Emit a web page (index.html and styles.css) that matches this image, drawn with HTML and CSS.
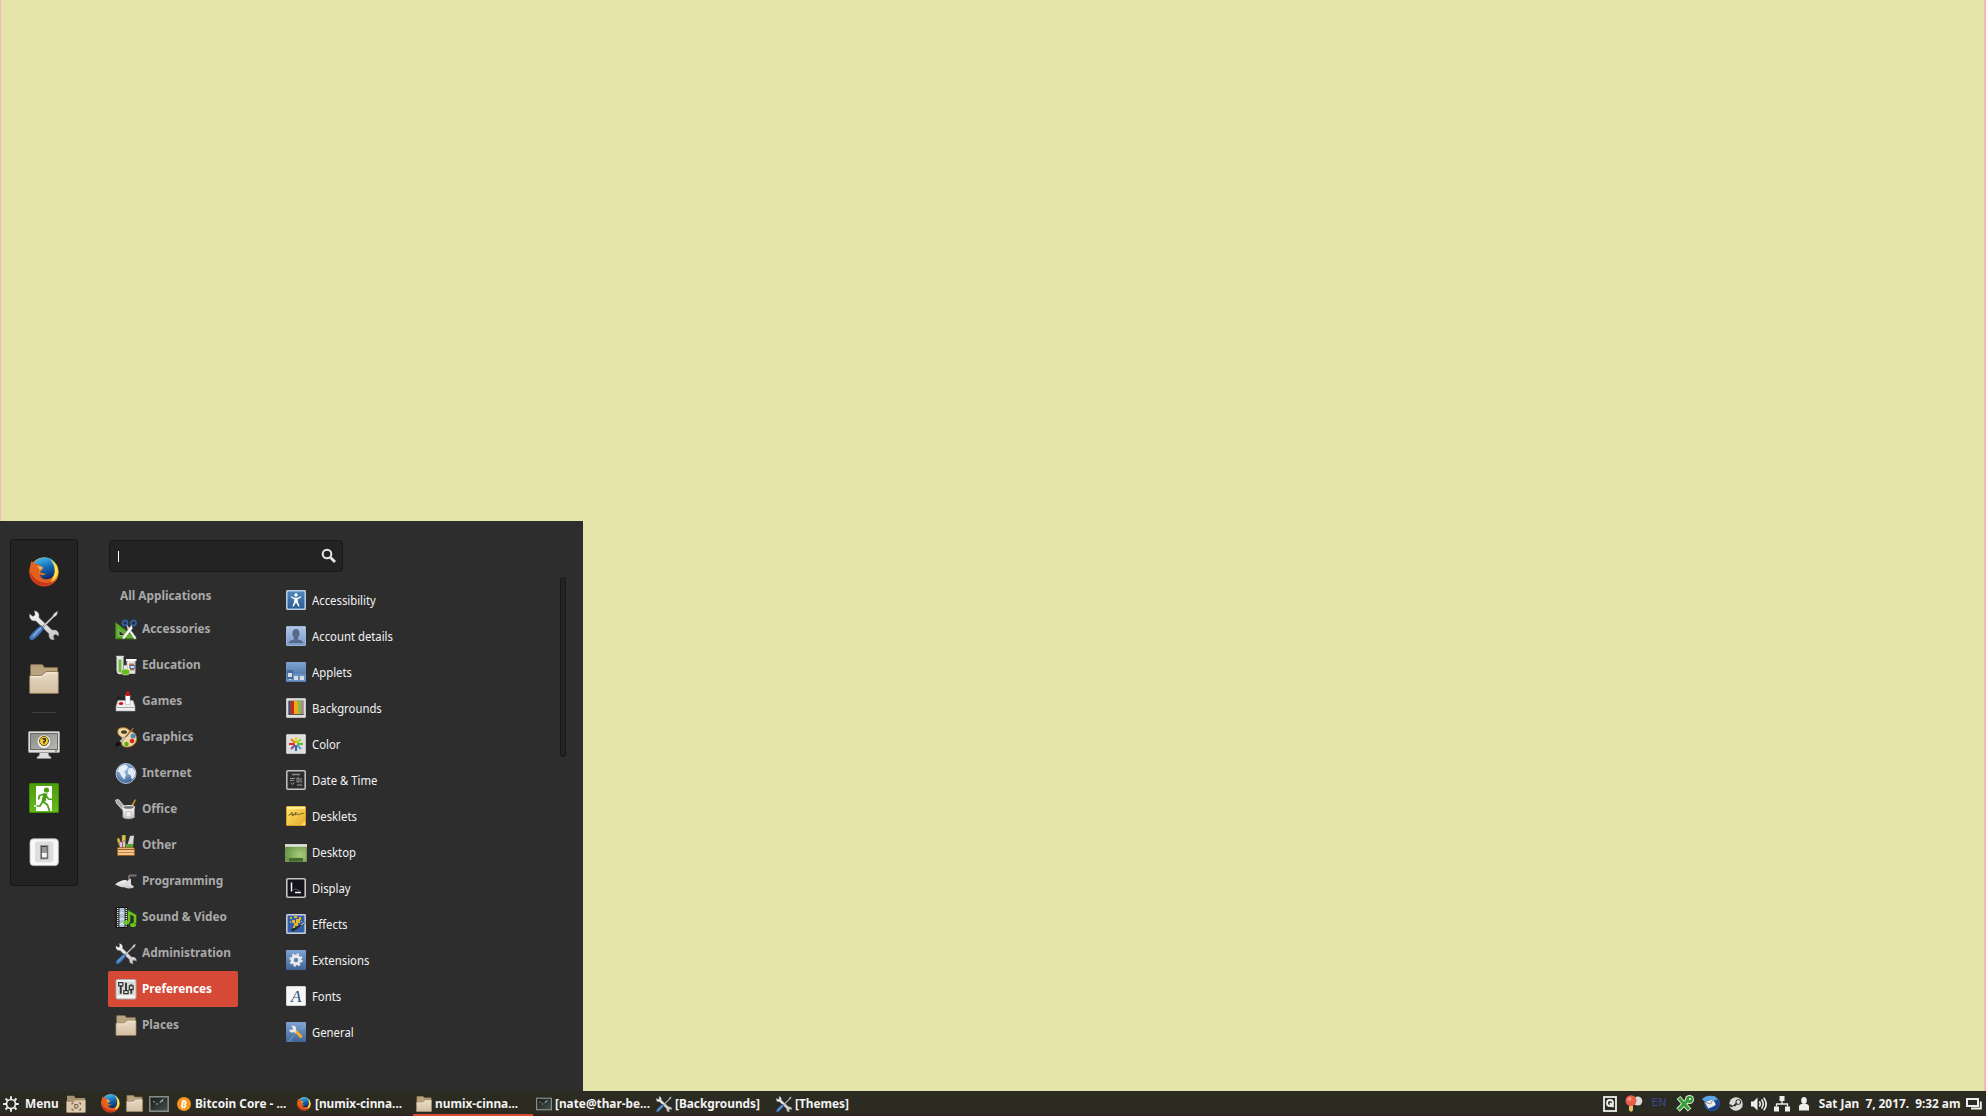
FILE: index.html
```
<!DOCTYPE html>
<html lang="en">
<head>
<meta charset="utf-8">
<title>Desktop</title>
<link rel="stylesheet" href="styles.css">
</head>
<body>
<svg class="defs" aria-hidden="true">
  <defs>
    <linearGradient id="gBlue" x1="0" y1="0" x2="0" y2="1"><stop offset="0" stop-color="#7fa3cf"/><stop offset="1" stop-color="#3f6698"/></linearGradient>
    <linearGradient id="gAccess" x1="0" y1="0" x2="0" y2="1"><stop offset="0" stop-color="#4f88bd"/><stop offset="1" stop-color="#2b5b92"/></linearGradient>
    <linearGradient id="gUser" x1="0" y1="0" x2="0" y2="1"><stop offset="0" stop-color="#b0c6e6"/><stop offset="1" stop-color="#7799c8"/></linearGradient>
    <linearGradient id="gTan" x1="0" y1="0" x2="0" y2="1"><stop offset="0" stop-color="#e9dbc5"/><stop offset="1" stop-color="#d3bfa2"/></linearGradient>
    <linearGradient id="gLight" x1="0" y1="0" x2="0" y2="1"><stop offset="0" stop-color="#fafafa"/><stop offset="1" stop-color="#c4c4c4"/></linearGradient>
    <linearGradient id="gGreen" x1="0" y1="0" x2="0" y2="1"><stop offset="0" stop-color="#4d9c0c"/><stop offset="1" stop-color="#66b91c"/></linearGradient>
    <linearGradient id="gNote" x1="0" y1="0" x2="1" y2="1"><stop offset="0" stop-color="#fbe56a"/><stop offset="1" stop-color="#e9a92b"/></linearGradient>
    <linearGradient id="gFox" x1="0.9" y1="0" x2="0.2" y2="1"><stop offset="0" stop-color="#fff06a"/><stop offset=".35" stop-color="#f9b020"/><stop offset=".65" stop-color="#e9661b"/><stop offset="1" stop-color="#c9281c"/></linearGradient>
    <linearGradient id="gSky" x1="0.3" y1="0" x2="0.6" y2="1"><stop offset="0" stop-color="#45b9ee"/><stop offset=".5" stop-color="#1269b4"/><stop offset="1" stop-color="#0f2463"/></linearGradient>
    <radialGradient id="gGlobe" cx=".4" cy=".3" r=".8"><stop offset="0" stop-color="#a9c8ec"/><stop offset="1" stop-color="#2d568f"/></radialGradient>
    <radialGradient id="gDesk" cx=".7" cy=".6" r=".8"><stop offset="0" stop-color="#a9cc7c"/><stop offset="1" stop-color="#5f9140"/></radialGradient>
    <linearGradient id="gScreen" x1="0" y1="0" x2="1" y2="1"><stop offset="0" stop-color="#8a8d88"/><stop offset="1" stop-color="#b7bab4"/></linearGradient>
    <linearGradient id="gTerm" x1="0" y1="0" x2="1" y2="1"><stop offset="0" stop-color="#151819"/><stop offset="1" stop-color="#495251"/></linearGradient>

    <symbol id="firefox" viewBox="0 0 30 30">
      <circle cx="15" cy="15" r="14.6" fill="url(#gFox)"/>
      <path d="M5 6C8 1.8 12 .4 16 .4c5 0 9 2.600 10.500 6.500C28 12 25 22 19 22.500c-4 .5-8-2-8-5 1.500 1 4 1 6-.8-2.500.2-3.500-1-6-1.200 0-2 2.200-2.200 3.200-4-2.200-.4-3-2.500-5.700-2.700C7 8.500 6 7.500 5 6z" fill="url(#gSky)"/>
      <path d="M21 2c5 3 8.500 8 7.500 14-.8 4-3 7-6.500 9.500 2-4.500 4.500-8 3.500-14-.4-4-2-6.500-4.500-9.500z" fill="#ffe34d"/>
      <path d="M2.500 4c1 1.500 3 2.500 4.500 3 2 .6 4 1 6 2.500-1.500 1.500-3 2-3 4-3.500 5 2 10.500 8 9 2.500-.6 4-1.200 5-2-1.500 4-5 6.500-9 6.500C7 27.500.5 22 .5 14.500.5 10 1.500 7 2.500 4z" fill="#e4601e"/>
      <path d="M1 14c0 8 6 14.500 14 14.600 5 0 9-2 11.500-5.600-4 3-9 4-14 2C6 23 3 19 1 14z" fill="#c93420"/>
      <path d="M8 9c2 .2 4 .4 6 1.200-.5 1-1.500 1.800-3.500 2.100z" fill="#f6b069"/>
    </symbol>

    <symbol id="tools" viewBox="0 0 30 30">
      <path d="M5.500.8 6.200 5 3.800 6.400.8 4C-.2 8 2 11.500 6.600 10.800L20 23.800c-.8 4 2 6.500 5.200 6l-.8-4 2-1.600 3.300 1.800c.8-3.600-2-6.800-6.400-5.700L9.800 7.600C10.600 4.500 9.400 1.500 5.500.8z" fill="url(#gLight)" stroke="#8d8d8d" stroke-width=".5"/>
      <path d="M28.600 1.500c-1.600 0-4.600 2.500-4.800 4.500L13.600 16l1.200 1.200L25 7c2-.3 3.900-3.300 3.600-5.500z" fill="#e1e1e1" stroke="#666" stroke-width=".6"/>
      <path d="M12.300 15.600c-3.300 1.500-8.500 7-11.300 10.500-1.500 2.800 1 5 3.300 3.500 3.500-2.500 8.500-7.500 10.500-11.200z" fill="#4a7cc0" stroke="#234f8c" stroke-width=".8"/>
      <path d="m4 26 8-8" stroke="#8fb3e2" stroke-width="1.200"/>
    </symbol>

    <symbol id="folder" viewBox="0 0 30 30">
      <path d="M1.500 15V1.500C1.500.8 2 .6 2.500.6h10c1 0 1.300.4 2 1.400l1 1.500h13V15z" fill="#b9a27e" stroke="#806a48"/>
      <path d="M.6 28.500V12.600c0-.8.400-1 1-1h9.900c1 0 1.500-.2 2.300-1L16 8.300c.6-.6 1-.7 2-.7h10.400c.7 0 1 .3 1 1v19.900c0 .6-.3.900-.9.900H1.500c-.6 0-.9-.3-.9-.9z" fill="url(#gTan)" stroke="#8c7450"/>
      <path d="M1.700 12.700h10.500c1 0 1.700-.4 2.300-1l2.200-2.300c.5-.5.800-.6 1.500-.6h10" fill="none" stroke="#faf3e6"/>
    </symbol>

    <symbol id="lock" viewBox="0 0 32 28">
      <path d="M12 21h8l1 4 2 1v1.500H9V26l2-1z" fill="#dcdcda" stroke="#8c8c8a" stroke-width=".6"/>
      <rect x=".5" y=".5" width="31" height="21" rx="1" fill="#dededc" stroke="#9b9b99"/>
      <rect x="2.500" y="2.500" width="27" height="16" fill="url(#gScreen)" stroke="#686b66"/>
      <circle cx="16" cy="10.800" r="7" fill="#eeeeec" stroke="#777a74" stroke-width=".7"/>
      <circle cx="16" cy="10" r="4.500" fill="#f5cf32" stroke="#6d5206"/>
      <path d="M14.500 8h2.800v2l-1.600 1 .8 1.500" fill="none" stroke="#222" stroke-width="1.300"/>
      <path d="M27 20h2" stroke="#555"/>
    </symbol>

    <symbol id="exit" viewBox="0 0 30 30">
      <rect x=".5" y=".5" width="29" height="29" rx="1" fill="url(#gGreen)" stroke="#3f8a04"/>
      <rect x="7" y="3" width="16" height="25" fill="#fff"/>
      <circle cx="17.500" cy="7" r="2.600" fill="#4b9d12"/>
      <path d="M15.500 10.500 13.500 18l5 4 2 6M14 18l-3 5H5M15.500 11l-5 1.500-1 4M16.500 12l3 4 4 .5" fill="none" stroke="#4b9d12" stroke-width="1.700" stroke-linejoin="round"/>
      <path d="M14.500 10.500h4l-2 8-3.500-1z" fill="#4b9d12"/>
      <path d="M5 23h2.500" stroke="#fff" stroke-width="1.500"/>
    </symbol>

    <symbol id="power" viewBox="0 0 30 28">
      <rect x="1" y=".8" width="28.400" height="26.800" rx="3.500" fill="#f8f8f8" stroke="#bdbdbd" stroke-width=".8"/>
      <rect x="6" y="3.500" width="18.500" height="21" rx="3" fill="#dedede"/>
      <rect x="11.500" y="7.500" width="7.500" height="13.500" fill="#444" stroke="#999"/>
      <rect x="12.800" y="9" width="5" height="7" fill="#999"/><rect x="12.800" y="15" width="5" height="4.500" fill="#f7f7f7"/>
    </symbol>

    <symbol id="accessories" viewBox="0 0 22 20">
      <path d="M.7 3v16.300h21z" fill="#62a92f" stroke="#3c7d14"/><path d="M4 10.500v5.500h6.500z" fill="#2d2d2d" stroke="#a0d873" stroke-width=".8"/>
      <circle cx="10" cy="3.500" r="2.500" fill="none" stroke="#315f9f" stroke-width="1.800"/><circle cx="18.500" cy="3.500" r="2.500" fill="none" stroke="#315f9f" stroke-width="1.800"/>
      <path d="m12 5.500 8.800 12v2h-1.500L12.500 9.500z" fill="#f5f5f5" stroke="#aaa" stroke-width=".4"/><path d="M16.500 5.500 8 17l-.3 2.500L9.500 19l8-10z" fill="#fff" stroke="#aaa" stroke-width=".4"/>
    </symbol>
    <symbol id="education" viewBox="0 0 22 20">
      <path d="M1 .8h8M2 1v14q0 3.500 3 3.500t3-3.500V1z" fill="#dfe8da" stroke="#ddd"/><path d="M3.500 4h3v12q-1.500 2-3 0z" fill="#72b447"/>
      <path d="M12 4h8v14h-8z" fill="#e9e9e9" stroke="#bbb"/><path d="M11 4.500h10.500" stroke="#fff" stroke-width="2"/><path d="M14 8h5v7h-4z" fill="#bd7437"/><path d="M15 10h5v3h-5z" fill="#d5dde8" stroke="#4771a3"/>
      <path d="M9 10h3v3l3 3.500q0 3-4.500 3T6 16.500L9 13z" fill="#e8f2e0" stroke="#ccc" stroke-width=".6"/><ellipse cx="10.500" cy="16.500" rx="4" ry="2.700" fill="#65bd1d"/>
    </symbol>
    <symbol id="games" viewBox="0 0 22 20">
      <path d="M3 8q-2-1 0-2.500l3 1" fill="none" stroke="#171717"/>
      <path d="M3 9h15l2 6v4.500H1V15z" fill="#eee" stroke="#aaa" stroke-width=".6"/><path d="M1.500 16h18" stroke="#aaa"/>
      <rect x="10.500" y="4" width="4.500" height="9" fill="#fff" stroke="#aaa" stroke-width=".5"/><rect x="11" y="0" width="3.500" height="4.500" fill="#d01313"/><ellipse cx="6" cy="12" rx="2.200" ry="1.500" fill="#d01313"/>
    </symbol>
    <symbol id="graphics" viewBox="0 0 22 20">
      <path d="M4 1C8-.5 13 0 15 4c5 0 6.500 4 6.500 8-.5 5-5.500 8-10.500 7.500C6 19 6 15 8 12c1-2-4-3-5-6C2.500 4 3 2 4 1z" fill="#efd8a5" stroke="#b97c21"/>
      <ellipse cx="9" cy="4.500" rx="3" ry="1.800" fill="#4a3c26"/><circle cx="18" cy="8.500" r="2.500" fill="#4f86c6"/><circle cx="17" cy="13.500" r="2.300" fill="#d92920"/><circle cx="11.500" cy="16.500" r="2.300" fill="#58ad20"/>
      <path d="M18.500.5 6 14.500" stroke="#8f6b39" stroke-width="1.500"/><path d="m10 9-5 6" stroke="#bbb" stroke-width="2"/><path d="M5 14q-4 0-5 5 6 0 6-4z" fill="#111"/>
    </symbol>
    <symbol id="internet" viewBox="0 0 20 20">
      <circle cx="10" cy="10" r="9.500" fill="url(#gGlobe)" stroke="#c8d9ee" stroke-width=".8"/>
      <path d="M4 3.500 9 1.500l3 2-1.500 3L8 8l2 3-1.500 5-3-3.500L4 9 1.500 8zM12.500 5l4-.5 2.500 4-1 5-2.500 2.500-1-4-3-2z" fill="#f0f4f9" opacity=".9"/>
    </symbol>
    <symbol id="office" viewBox="0 0 20 20">
      <path d="M20 0 15 10l-2-1 5-8z" fill="#c98c2d"/><path d="m0 1 3-.5L11 10l-3 2L1 4z" fill="#aaa" stroke="#ddd" stroke-width=".8"/>
      <path d="M7 8v9.500q5 3 11 0V8z" fill="url(#gLight)" stroke="#999" stroke-width=".5"/><ellipse cx="12.500" cy="8" rx="5.500" ry="1.800" fill="#777" stroke="#f3f3f3"/><path d="M10 12h5v5h-5z" fill="#eee" stroke="#aaa" stroke-width=".5"/>
    </symbol>
    <symbol id="other" viewBox="0 0 20 21">
      <path d="m1 4 3 9h3L3 3zM6 0h3.500v12H6z" fill="#d9c54d" stroke="#9a8525" stroke-width=".6"/><path d="m14 1 4-.5-1 11h-6z" fill="#d5d5d5"/><path d="M4 7h2v6H4zM7 6h2v7H7z" fill="#fff" stroke="#76397d" stroke-width=".6"/><path d="M10 9h7v4h-7z" fill="#55a729"/>
      <path d="M2 12.500h15.500l1.500 2H1z" fill="#e8b67c" stroke="#8a4d17" stroke-width=".6"/><path d="M1.500 14.500h17v6h-17z" fill="#f0c48e" stroke="#9a5a20"/><path d="M2 17.500h16" stroke="#c78745"/>
    </symbol>
    <symbol id="programming" viewBox="0 0 22 14">
      <path d="M14 10.500V2q0-1 1-1h6.500" fill="none" stroke="#777" stroke-width="1.800"/><path d="M0 10q5-4.500 11-4.500l3 3 5 3.500-1 1.500q-5 1-8-.5Q4 12.500 0 10z" fill="url(#gLight)"/><path d="m8 9 8-5v7z" fill="#ddd"/>
    </symbol>
    <symbol id="media" viewBox="0 0 22 21">
      <path d="M1 .5h11.500v20H1z" fill="#303030" stroke="#111"/><path d="M4.500 1h5v19h-5z" fill="#a8c1d9"/><path d="M4.500 6h5m-5 6h5m-5 5h5" stroke="#f2f2f2"/><path d="M2.700 1v19M11.300 1v19" stroke="#eee" stroke-width="1.300" stroke-dasharray="1 1"/>
      <path d="M14 15V5l6 3.500v8" fill="none" stroke="#43950a" stroke-width="3"/><path d="M14 15V5.500l6 3.500v7" fill="none" stroke="#7ed52a" stroke-width="1.400"/><ellipse cx="11.500" cy="15.500" rx="3" ry="2" fill="#67c51c"/><ellipse cx="18" cy="18" rx="3" ry="2" fill="#67c51c"/>
    </symbol>
    <symbol id="prefs" viewBox="0 0 20 20">
      <rect x=".5" y=".5" width="19" height="18.500" rx="1.500" fill="#f4f4f2" stroke="#aaa"/><rect x="1.800" y="2.500" width="16.500" height="13" fill="#d9d9d6"/>
      <path d="M5 5v9M10 3.500V13M15 5v9" stroke="#333" stroke-width="1.800"/><path d="M3 3.500h4v3H3zM8 11h4v3H8zM13.200 6.500h3.600v3.500h-3.600z" fill="#eee" stroke="#333" stroke-width="1.200"/>
    </symbol>

    <symbol id="accessibility" viewBox="0 0 20 20"><rect x=".8" y=".8" width="18.400" height="18.400" rx=".5" fill="url(#gAccess)" stroke="#b8d0e6" stroke-width="1.500"/><circle cx="10" cy="5" r="1.700" fill="#fff"/><path d="m5 6.300 3.500 1.500h3L15 6.300l.3 1L11.800 9.300v2.200l1.800 5h-1.300L10 12.300l-2.300 4.200H6.400l1.800-5V9.300L4.700 7.300z" fill="#fff"/></symbol>
    <symbol id="account" viewBox="0 0 20 20"><rect x=".5" y=".5" width="19" height="19" rx=".5" fill="url(#gUser)" stroke="#9db6da"/><path d="M10 3c4 0 4 5 3 7-.6 1.500-1.500 2-1 3 .5 1.300 5 .8 5 4H3c0-3.200 4.500-2.700 5-4 .5-1-.4-1.500-1-3-1-2-1-7 3-7z" fill="#566b8b"/></symbol>
    <symbol id="applets" viewBox="0 0 20 20"><rect width="20" height="20" rx=".7" fill="url(#gBlue)"/><path d="M0 12h20v7.500H0z" fill="#6a91c3"/><path d="M1 8h6v9H1z" fill="#456b9f"/><path d="M2 11h4v4H2zM8 14h4v4H8zM14 14h4v4h-4zM3 17h2v1H3z" fill="#d8dde3"/></symbol>
    <symbol id="backgrounds" viewBox="0 0 20 20"><rect x=".5" y=".5" width="19" height="19" rx=".5" fill="#ddd" stroke="#c2c0bd"/><path d="M2.500 2.500h15V17h-15z" fill="#777"/><path d="M2.500 3h2v13h-2z" fill="#2c4e75"/><path d="M4.500 3H8v13H4.500z" fill="#c22b1c"/><path d="M8 3h4l1 13H8z" fill="#f0a81c"/><path d="M11.500 3h4V16h-3z" fill="#8bba41"/><path d="M15.500 3h2v13h-2z" fill="#b0869a"/><path d="M2.500 16.500h15" stroke="#555"/></symbol>
    <symbol id="color" viewBox="0 0 20 20"><rect x=".5" y=".5" width="19" height="19" rx=".5" fill="#dedede" stroke="#c3c3c3"/><g stroke-width="2.100"><path d="M10 9V3" stroke="#efd118"/><path d="m10.700 9.300 4.200-4.200" stroke="#9ad52f"/><path d="M11 10h6" stroke="#61bd20"/><path d="m10.700 10.700 4.200 4.200" stroke="#5f9ad2"/><path d="M10 11v6" stroke="#3769ac"/><path d="m9.300 10.700-4.200 4.200" stroke="#7d5384"/><path d="M9 10H3" stroke="#dc3029"/><path d="M9.300 9.300 5.100 5.100" stroke="#ed841c"/></g><circle cx="10" cy="10" r="1" fill="#eee"/></symbol>
    <symbol id="date" viewBox="0 0 20 20"><rect x=".8" y=".8" width="18.400" height="18.400" rx="1" fill="#2d2d2d" stroke="#c5c5c5" stroke-width="1.500"/><path d="M6 4.500h8" stroke="#888" stroke-width="1.600"/><path d="M4 8.500h5M4 10.500h4M11 8h2v4h-2zM15 8v5M11 15h5M5 12.500l1.500 2 2-2" fill="none" stroke="#999"/></symbol>
    <symbol id="desklets" viewBox="0 0 20 20"><rect x=".5" y=".5" width="19" height="19" rx=".5" fill="url(#gNote)" stroke="#d5a127"/><path d="M1 1.800h18" stroke="#fff29e" stroke-width="2"/><path d="m2.500 10 3.500-4 .5 4 1.500-1 2-3-.5 3 2-1.500 1 1.500 1.500-1 4-.7M4.500 8.500h4" fill="none" stroke="#66521d" stroke-width=".8"/><path d="m19 15-4 4h4z" fill="#f9df78"/></symbol>
    <symbol id="desktop" viewBox="0 0 22 18"><rect x=".5" y=".5" width="21" height="17" fill="url(#gDesk)" stroke="#76975a"/><path d="M0 1.500h22" stroke="#e0e0e0" stroke-width="2.600"/><path d="M4 14h14v3.500H4z" fill="#456a30"/></symbol>
    <symbol id="display" viewBox="0 0 20 20"><rect x=".8" y=".8" width="18.400" height="18.400" rx="1" fill="#16141b" stroke="#c4c4c4" stroke-width="1.600"/><path d="M5.500 4.500v9M9 14.500h6" stroke="#f2f2f2" stroke-width="1.500"/><path d="m6 13 3-2 5 2" fill="none" stroke="#55505c"/></symbol>
    <symbol id="effects" viewBox="0 0 20 20"><rect x=".8" y=".8" width="18.400" height="18.400" rx=".5" fill="#315fab" stroke="#ccd1d8" stroke-width="1.500"/><path d="M5 16 20 8l-12.500 9z" fill="#202020" stroke="#333"/><path d="m15 11 5-3.500" stroke="#aaa" stroke-width="1.300"/><path d="M4 3h2v2H4zm4-1h3v2H8zm5 1h2v3h-2zM6 6h3v3H6zm4-1h4v4h-4zM8 9h4v3H8zM4 7h1v2H4zm11 0h1v1h-1zM7 12h2v2H7z" fill="#e5b62b"/></symbol>
    <symbol id="extensions" viewBox="0 0 20 20"><rect width="20" height="20" rx=".7" fill="url(#gBlue)"/><circle cx="10" cy="10" r="5.500" fill="none" stroke="#e7e9ec" stroke-width="2.400" stroke-dasharray="2.160"/><circle cx="10" cy="10" r="3.800" fill="none" stroke="#e7e9ec" stroke-width="3"/></symbol>
    <symbol id="fonts" viewBox="0 0 20 20"><rect x=".5" y=".5" width="19" height="19" rx=".5" fill="#f7f7f7" stroke="#d3d3d3"/><text x="5" y="15.500" font-family="Liberation Serif, serif" font-style="italic" font-size="17" fill="#2d4f83">A</text></symbol>
    <symbol id="general" viewBox="0 0 20 20"><rect width="20" height="20" rx=".7" fill="url(#gBlue)"/><path d="m0 20 10-10L5 20zm20-20L10 10l10-5z" fill="#8fb0d6" opacity=".3"/><path d="m5 4 2 2-1 2-3-.5c.5 3 3 3.800 5 2.500l2 2 2-2-2-2c1-3-1-5-5-4z" fill="#e7e7e7"/><path d="m9 10 2-1.500 5.500 5.500q-.3 2.500-2.500 2z" fill="#f4ad24"/></symbol>

    <symbol id="search" viewBox="0 0 16 16"><circle cx="6" cy="6" r="4.300" fill="none" stroke="#e8e8e8" stroke-width="2"/><path d="m9.500 9.500 4.500 4.500" stroke="#e8e8e8" stroke-width="2.800"/></symbol>
    <symbol id="gear" viewBox="0 0 16 16"><circle cx="8" cy="8" r="4.500" fill="none" stroke="#eee" stroke-width="1.700"/><path d="M8 .2v3M8 12.800v3M.2 8h3M12.800 8h3M2.500 2.500l2 2m7 7 2 2m0-11-2 2m-7 7-2 2" stroke="#eee" stroke-width="1.900"/></symbol>
    <symbol id="homefolder" viewBox="0 0 20 18"><path d="M1 9V.7h7L9.500 3H19v6z" fill="#a99270"/><path d="M.5 16.500V6.500h7L9.500 5h10v11.500q0 1-1 1h-17q-1 0-1-1z" fill="#dcc9ae" stroke="#a48d6b" stroke-width=".7"/><path d="M6 9.500V8h1.500M13 8h1.500v1.500M14.500 13.500V15H13M7.500 15H6v-1.500M8.800 9.500h2q1.200 0 1.200 1.800t-1.200 1.800h-2z" fill="none" stroke="#665338"/></symbol>
    <symbol id="terminal" viewBox="0 0 20 16"><rect x=".8" y=".8" width="18.400" height="14.400" fill="url(#gTerm)" stroke="#909493" stroke-width="1.400"/><path d="m4 5 2 1.500M7 8h2M11 7l1.500-3M13 6l1-3" stroke="#aab2af"/></symbol>
    <symbol id="bitcoin" viewBox="0 0 14 14"><circle cx="7" cy="7" r="7" fill="#f7931a"/><text x="3.900" y="10.500" font-family="Noto Sans, sans-serif" font-weight="700" font-size="9.500" fill="#fff" transform="rotate(10 7 7)">B</text><path d="M6 2.200v2M8 2.400v2M5.700 10v2M7.600 10v2" stroke="#fff" stroke-width=".8"/></symbol>

    <symbol id="backup" viewBox="0 0 14 16"><rect x="1" y="1" width="12" height="14" fill="none" stroke="#eee" stroke-width="1.800"/><circle cx="7" cy="7" r="3" fill="none" stroke="#eee" stroke-width="1.800"/><path d="m7 7 3.500 4" stroke="#eee" stroke-width="2"/></symbol>
    <symbol id="bulb" viewBox="0 0 18 17"><circle cx="12.800" cy="6" r="4.500" fill="#dadbd8"/><circle cx="6" cy="5.700" r="5.500" fill="#e85d47"/><circle cx="4.500" cy="4" r="2" fill="#f99a85"/><path d="M4 11h4v4l-1 1.500H5L4 15z" fill="#e4c268"/></symbol>
    <symbol id="xlogo" viewBox="0 0 18 17"><path d="m2.500 2.500 11 12.500M2 15 13 4" fill="none" stroke="#e5efe2" stroke-width="4.800"/><circle cx="13.500" cy="4.500" r="4.500" fill="#e5efe2"/><path d="m3 3 10 11.500M2.500 14.500 13 4" fill="none" stroke="#359d32" stroke-width="3"/><circle cx="13.500" cy="4.500" r="3.500" fill="#359d32"/><circle cx="14" cy="4" r="1" fill="#fff"/></symbol>
    <symbol id="mail" viewBox="0 0 18 17"><circle cx="10" cy="8.500" r="7.800" fill="#285aa4"/><path d="M0 4Q5-1 13 1.500l3 3-6 1-8 .5z" fill="#5da5e0"/><path d="m2.500 7 8.500-2.500L14 10l-7.500 3.500z" fill="#eee"/><path d="m2.500 7 6 2L11 4.500" fill="none" stroke="#8c8c8c"/><path d="M15 4q4 6-1 10-4 3-9 0 8 0 9-5z" fill="#1b3d82"/></symbol>
    <symbol id="steam" viewBox="0 0 14 14"><circle cx="7" cy="7" r="6.800" fill="#d9d9d8"/><path d="m0 7.800 4.300 2 4-4" fill="none" stroke="#30302a" stroke-width="2"/><circle cx="9.300" cy="5" r="2.400" fill="#d9d9d8" stroke="#30302a" stroke-width="1"/><circle cx="4.700" cy="10.200" r="1.300" fill="#d9d9d8"/></symbol>
    <symbol id="volume" viewBox="0 0 16 14"><path d="M0 4.500h2.500l4-4v13l-4-4H0z" fill="#eee"/><path d="M8.300 4.500q2 2.500 0 5M10.500 2.500q3.500 4.500 0 9M12.700.7q5 6.300 0 12.600" fill="none" stroke="#eee" stroke-width="1.600"/></symbol>
    <symbol id="network" viewBox="0 0 16 16"><path d="M5.500 0h5v5h-5zM0 10.500h5v5H0zM11 10.500h5v5h-5z" fill="#eee"/><path d="M8 5v3M2.500 10.500V8h11v2.500" fill="none" stroke="#eee" stroke-width="1.300"/></symbol>
    <symbol id="person" viewBox="0 0 10 14"><ellipse cx="5" cy="3.600" rx="2.800" ry="3.500" fill="#eee"/><path d="M0 13.500V10q0-3 3-3h4q3 0 3 3v3.500z" fill="#eee"/></symbol>
    <symbol id="windows" viewBox="0 0 16 12"><path d="M1 1h11v7H1z" fill="none" stroke="#eee" stroke-width="2"/><path d="M14.800 3.500v7H5" fill="none" stroke="#eee" stroke-width="2"/></symbol>
  </defs>
</svg>

<div class="screen">
  <main class="wallpaper"></main>

  <section class="menu">
    <aside class="favorites">
      <svg class="fav fav-first"><use href="#firefox"/></svg>
      <svg class="fav"><use href="#tools"/></svg>
      <svg class="fav"><use href="#folder"/></svg>
      <hr class="fav-sep">
      <svg class="fav fav-wide"><use href="#lock"/></svg>
      <svg class="fav"><use href="#exit"/></svg>
      <svg class="fav"><use href="#power"/></svg>
    </aside>
    <div class="menu-main">
      <div class="search"><span class="caret"></span><svg class="search-icon"><use href="#search"/></svg></div>
      <div class="columns">
        <nav class="categories">
          <div class="category all"><span>All Applications</span></div>
          <div class="category"><svg><use href="#accessories"/></svg><span>Accessories</span></div>
          <div class="category"><svg><use href="#education"/></svg><span>Education</span></div>
          <div class="category"><svg><use href="#games"/></svg><span>Games</span></div>
          <div class="category"><svg><use href="#graphics"/></svg><span>Graphics</span></div>
          <div class="category"><svg><use href="#internet"/></svg><span>Internet</span></div>
          <div class="category"><svg><use href="#office"/></svg><span>Office</span></div>
          <div class="category"><svg><use href="#other"/></svg><span>Other</span></div>
          <div class="category"><svg><use href="#programming"/></svg><span>Programming</span></div>
          <div class="category"><svg><use href="#media"/></svg><span>Sound &amp; Video</span></div>
          <div class="category"><svg><use href="#tools"/></svg><span>Administration</span></div>
          <div class="category selected"><svg><use href="#prefs"/></svg><span>Preferences</span></div>
          <div class="category"><svg><use href="#folder"/></svg><span>Places</span></div>
        </nav>
        <div class="apps">
          <div class="app"><svg><use href="#accessibility"/></svg><span>Accessibility</span></div>
          <div class="app"><svg><use href="#account"/></svg><span>Account details</span></div>
          <div class="app"><svg><use href="#applets"/></svg><span>Applets</span></div>
          <div class="app"><svg><use href="#backgrounds"/></svg><span>Backgrounds</span></div>
          <div class="app"><svg><use href="#color"/></svg><span>Color</span></div>
          <div class="app"><svg><use href="#date"/></svg><span>Date &amp; Time</span></div>
          <div class="app"><svg><use href="#desklets"/></svg><span>Desklets</span></div>
          <div class="app"><svg class="wide"><use href="#desktop"/></svg><span>Desktop</span></div>
          <div class="app"><svg><use href="#display"/></svg><span>Display</span></div>
          <div class="app"><svg><use href="#effects"/></svg><span>Effects</span></div>
          <div class="app"><svg><use href="#extensions"/></svg><span>Extensions</span></div>
          <div class="app"><svg><use href="#fonts"/></svg><span>Fonts</span></div>
          <div class="app"><svg><use href="#general"/></svg><span>General</span></div>
        </div>
        <div class="scrollbar"></div>
      </div>
    </div>
  </section>

  <footer class="panel">
    <div class="launchers">
      <svg class="l-gear"><use href="#gear"/></svg><span class="menu-label">Menu</span>
      <svg class="l-home"><use href="#homefolder"/></svg>
      <svg class="l-fox"><use href="#firefox"/></svg>
      <svg class="l-folder"><use href="#folder"/></svg>
      <svg class="l-term"><use href="#terminal"/></svg>
    </div>
    <div class="tasks">
      <div class="task"><svg><use href="#bitcoin"/></svg><span>Bitcoin Core - ...</span></div>
      <div class="task"><svg><use href="#firefox"/></svg><span>[numix-cinna...</span></div>
      <div class="task active"><svg class="big"><use href="#folder"/></svg><span>numix-cinna...</span></div>
      <div class="task"><svg class="big"><use href="#terminal"/></svg><span>[nate@thar-be...</span></div>
      <div class="task"><svg class="big"><use href="#tools"/></svg><span>[Backgrounds]</span></div>
      <div class="task"><svg class="big"><use href="#tools"/></svg><span>[Themes]</span></div>
    </div>
    <div class="tray">
      <svg class="t-14"><use href="#backup"/></svg>
      <svg class="t-18"><use href="#bulb"/></svg>
      <span class="lang">EN</span>
      <svg class="t-18"><use href="#xlogo"/></svg>
      <svg class="t-18"><use href="#mail"/></svg>
      <svg class="t-steam"><use href="#steam"/></svg>
      <svg class="t-16"><use href="#volume"/></svg>
      <svg class="t-net"><use href="#network"/></svg>
      <svg class="t-person"><use href="#person"/></svg>
      <span class="clock">Sat Jan&nbsp; 7, 2017.&nbsp; 9:32 am</span>
      <svg class="t-16"><use href="#windows"/></svg>
    </div>
  </footer>
</div>
</body>
</html>
```

FILE: styles.css
```
* { box-sizing: border-box; }

body {
  margin: 0;
  font-family: "Noto Sans", "Open Sans", sans-serif;
  font-size: 13px;
}

svg { display: block; flex: none; }
.defs { position: absolute; width: 0; height: 0; }

.screen {
  position: relative;
  display: flex;
  flex-direction: column;
  width: 1986px;
  height: 1116px;
  overflow: hidden;
}

.wallpaper {
  flex: 1;
  background: #e5e4aa;
  border: solid #f2b8b4;
  border-width: 0 2px 0 1px;
}

/* Application menu, floats over the desktop */
.menu {
  position: absolute;
  left: 0;
  bottom: 25px;
  display: flex;
  align-items: flex-start;
  gap: 30px;
  width: 583px;
  height: 570px;
  padding: 18px 0 0 10px;
  background: #2d2d2d;
}

.favorites {
  display: flex;
  flex-direction: column;
  align-items: center;
  width: 68px;
  height: 347px;
  padding-top: 17px;
  background: #232323;
  border: 1px solid #161616;
  border-radius: 3px;
}
.fav { width: 30px; height: 30px; margin-bottom: 24px; }
.fav-first { margin-bottom: 23px; }
.fav-wide { width: 32px; height: 28px; }
.fav-sep { flex: none; width: 24px; height: 1px; margin: -6px 0 18px; border: 0; background: #414141; }

.menu-main { width: 459px; padding-top: 1px; }

.search {
  display: flex;
  align-items: center;
  justify-content: space-between;
  width: 234px;
  height: 32px;
  margin-left: 1px;
  padding: 0 5px 0 8px;
  background: #232323;
  border: 1px solid #171717;
  border-radius: 4px;
}
.caret { width: 1px; height: 11px; background: #fff; }
.search-icon { width: 16px; height: 16px; }

.columns { display: flex; }

/* Labels use a narrowed face */
.category span, .app span, .task span, .menu-label, .clock {
  transform-origin: left center;
  transform: scaleX(.91);
}

.categories { width: 130px; padding-top: 8px; color: #a9a9a9; font-weight: 700; }
.category {
  display: flex;
  align-items: center;
  gap: 5px;
  height: 36px;
  padding-left: 7px;
  white-space: nowrap;
  border-radius: 2px;
}
.category svg { width: 22px; height: 21px; }
.category span { padding-bottom: 2px; }
.category.all { height: 31px; padding-left: 12px; }
.category.selected { background: #d64937; color: #fff; }

.apps { width: 274px; margin-left: 48px; padding-top: 10px; color: #f2f2f2; }
.app { display: flex; align-items: center; gap: 6px; height: 36px; white-space: nowrap; }
.app span { padding-bottom: 1px; transform: scaleX(.87); }
.app svg { width: 20px; height: 20px; }
.app svg.wide { width: 22px; height: 18px; margin: 2px -1px 0; }

.scrollbar {
  width: 6px;
  height: 180px;
  margin-top: 5px;
  background: #232323;
  border: 1px solid #181818;
  border-radius: 3px;
}

/* Bottom panel */
.panel {
  display: flex;
  align-items: center;
  height: 25px;
  background: linear-gradient(#2c2b22 0 23px, #331d20 24px);
  color: #f2f2f2;
  font-weight: 700;
  white-space: nowrap;
}

.launchers { display: flex; align-items: center; width: 173px; height: 25px; padding-left: 3px; }
.l-gear { width: 16px; height: 16px; margin-right: 6px; }
.menu-label { width: 41px; padding-bottom: 2px; }
.l-home { width: 20px; height: 18px; margin-right: 15px; }
.l-fox { width: 19px; height: 19px; margin-right: 5px; }
.l-folder { width: 19px; height: 17px; margin-right: 5px; }
.l-term { width: 20px; height: 16px; }

.tasks { display: flex; flex: 1; }
.task {
  display: grid;
  grid-template-columns: 18px 1fr;
  align-items: center;
  justify-items: start;
  width: 120px;
  height: 25px;
  padding-left: 4px;
}
.task span { padding-bottom: 2px; }
.task svg { width: 14px; height: 14px; }
.task svg.big { width: 16px; height: 16px; margin-left: -1px; }
.task.active { box-shadow: inset 0 -2px #dc4936; }

.tray {
  display: grid;
  grid-template-columns: 24px 24px 26px 25px 28px 21px 25px 21px 24px 147px 21px 2px;
  align-items: center;
  justify-items: center;
  height: 25px;
}
.t-14 { width: 14px; height: 16px; }
.t-16 { width: 16px; height: 14px; }
.t-18 { width: 18px; height: 17px; }
.t-steam { width: 14px; height: 14px; }
.t-net { width: 16px; height: 16px; }
.t-person { width: 10px; height: 14px; }
.clock { justify-self: start; padding: 0 0 2px 3px; }
.lang { color: #3a4791; font-family: "DejaVu Sans", sans-serif; font-size: 11px; font-weight: 400; padding-bottom: 2px; }
```
